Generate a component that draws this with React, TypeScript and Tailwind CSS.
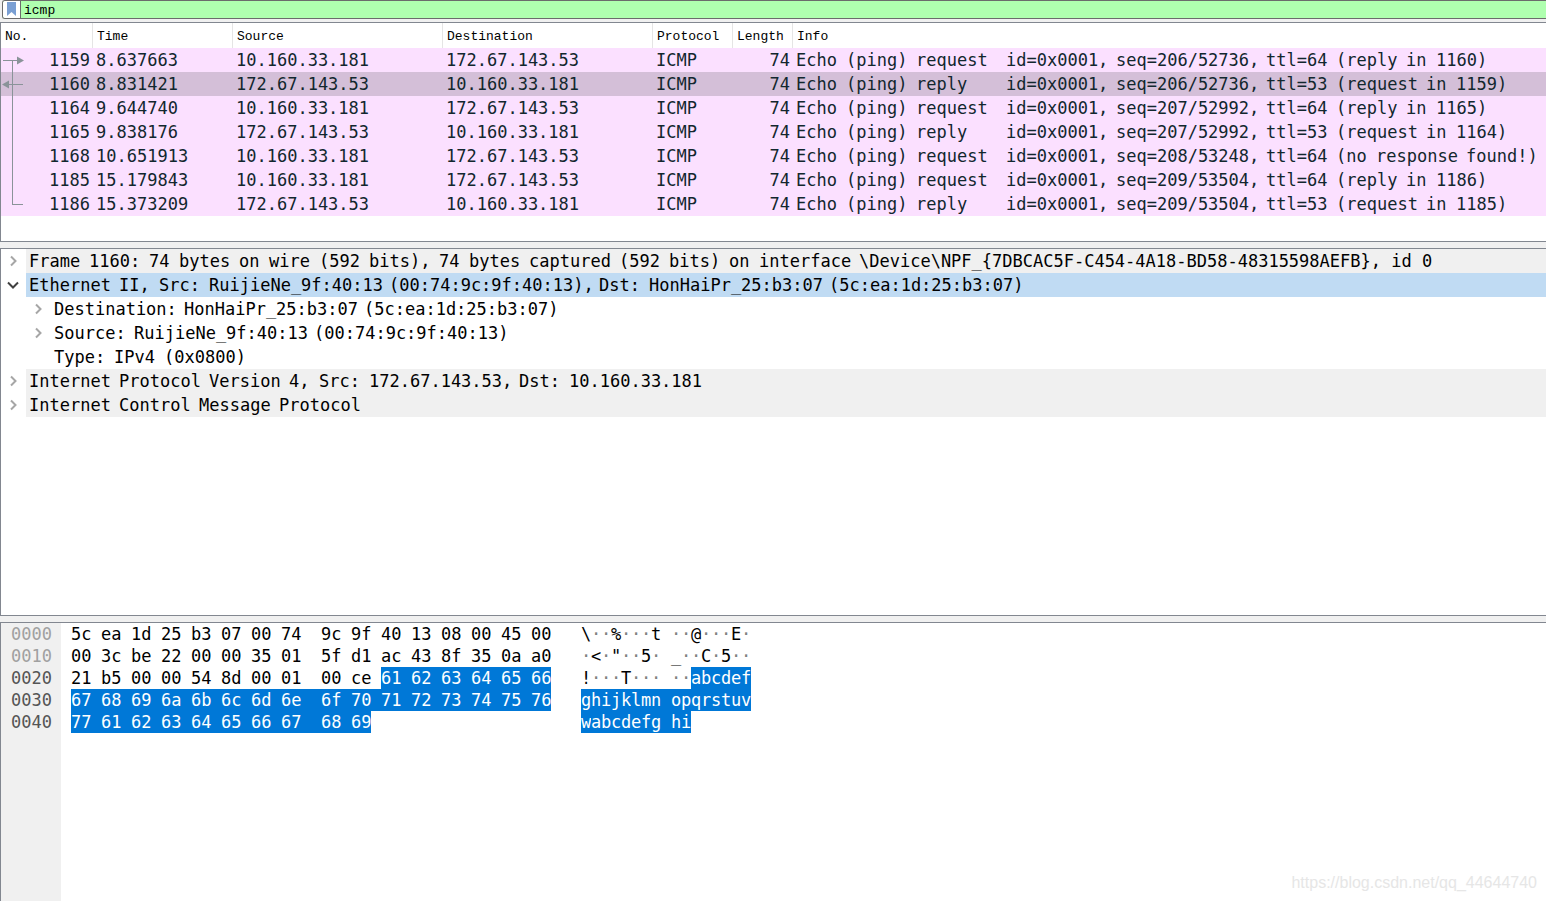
import React from "react";

type Packet = {
  no: number;
  time: string;
  source: string;
  destination: string;
  kind: "request" | "reply";
  seq: string;
  ttl: number;
  note: string;
};

const LOCAL = "10.160.33.181";
const REMOTE = "172.67.143.53";

const packets: Packet[] = [
  { no: 1159, time: "8.637663", source: LOCAL, destination: REMOTE, kind: "request", seq: "206/52736", ttl: 64, note: "(reply in 1160)" },
  { no: 1160, time: "8.831421", source: REMOTE, destination: LOCAL, kind: "reply", seq: "206/52736", ttl: 53, note: "(request in 1159)" },
  { no: 1164, time: "9.644740", source: LOCAL, destination: REMOTE, kind: "request", seq: "207/52992", ttl: 64, note: "(reply in 1165)" },
  { no: 1165, time: "9.838176", source: REMOTE, destination: LOCAL, kind: "reply", seq: "207/52992", ttl: 53, note: "(request in 1164)" },
  { no: 1168, time: "10.651913", source: LOCAL, destination: REMOTE, kind: "request", seq: "208/53248", ttl: 64, note: "(no response found!)" },
  { no: 1185, time: "15.179843", source: LOCAL, destination: REMOTE, kind: "request", seq: "209/53504", ttl: 64, note: "(reply in 1186)" },
  { no: 1186, time: "15.373209", source: REMOTE, destination: LOCAL, kind: "reply", seq: "209/53504", ttl: 53, note: "(request in 1185)" },
];

const columns = ["No.", "Time", "Source", "Destination", "Protocol", "Length", "Info"];

type TreeItem = { text: string; state: "closed" | "open" | "leaf"; level: 1 | 2; tone: string };

const tree: TreeItem[] = [
  { text: "Frame 1160: 74 bytes on wire (592 bits), 74 bytes captured (592 bits) on interface \\Device\\NPF_{7DBCAC5F-C454-4A18-BD58-48315598AEFB}, id 0", state: "closed", level: 1, tone: "bg-[#f0f0f0]" },
  { text: "Ethernet II, Src: RuijieNe_9f:40:13 (00:74:9c:9f:40:13), Dst: HonHaiPr_25:b3:07 (5c:ea:1d:25:b3:07)", state: "open", level: 1, tone: "bg-[#c0dbf3]" },
  { text: "Destination: HonHaiPr_25:b3:07 (5c:ea:1d:25:b3:07)", state: "closed", level: 2, tone: "" },
  { text: "Source: RuijieNe_9f:40:13 (00:74:9c:9f:40:13)", state: "closed", level: 2, tone: "" },
  { text: "Type: IPv4 (0x0800)", state: "leaf", level: 2, tone: "" },
  { text: "Internet Protocol Version 4, Src: 172.67.143.53, Dst: 10.160.33.181", state: "closed", level: 1, tone: "bg-[#f0f0f0]" },
  { text: "Internet Control Message Protocol", state: "closed", level: 1, tone: "bg-[#f0f0f0]" },
];

const bytes = (
  "5c ea 1d 25 b3 07 00 74 9c 9f 40 13 08 00 45 00 " +
  "00 3c be 22 00 00 35 01 5f d1 ac 43 8f 35 0a a0 " +
  "21 b5 00 00 54 8d 00 01 00 ce 61 62 63 64 65 66 " +
  "67 68 69 6a 6b 6c 6d 6e 6f 70 71 72 73 74 75 76 " +
  "77 61 62 63 64 65 66 67 68 69"
).split(" ");
const SELECTED_FROM = 42;
const offsets = ["0000", "0010", "0020", "0030", "0040"];

function toChar(hex: string) {
  const code = parseInt(hex, 16);
  return code > 32 && code < 127 ? String.fromCharCode(code) : "·";
}

/** Width of one character cell in the data panes. */
const CELL = 10;

/**
 * Lays words out on the character grid, so that columns line up between rows.
 * The tail after a closing brace stays in one run with the long name before it.
 */
function GridText({ text }: { text: string }) {
  return (
    <>
      {text.split(/(?<= )(?<!}.*)(?! )/).map((word, i) => (
        <span key={i} className="inline-block" style={{ width: word.length * CELL }}>{word}</span>
      ))}
    </>
  );
}

function ConversationMark({ index }: { index: number }) {
  const last = index === packets.length - 1;
  return (
    <svg width="24" height="24" viewBox="0 0 24 24" fill="none" stroke="#8a9399" shapeRendering="crispEdges" aria-hidden="true">
      {index === 0 && (
        <>
          <path d="M2 12.5H17M11.5 12.5V24" />
          <path d="M16 8.5L23 12.5L16 16.5Z" fill="#8a9399" stroke="none" shapeRendering="auto" />
        </>
      )}
      {index === 1 && (
        <>
          <path d="M8 12.5H22M11.5 0V24" />
          <path d="M8 8.5L1 12.5L8 16.5Z" fill="#8a9399" stroke="none" shapeRendering="auto" />
        </>
      )}
      {index > 1 && !last && <path d="M11.5 0V24" />}
      {last && <path d="M11.5 0V12.5H22" />}
    </svg>
  );
}

function PacketList() {
  return (
    <section aria-label="Packet list" className="border-y border-l border-[#828790] bg-white pb-[25px]">
      <table className="w-full table-fixed border-collapse whitespace-pre text-left">
        <colgroup>
          <col className="w-[92px]" />
          <col className="w-[140px]" />
          <col className="w-[210px]" />
          <col className="w-[210px]" />
          <col className="w-[80px]" />
          <col className="w-[60px]" />
          <col />
        </colgroup>
        <thead className="font-['Liberation_Mono',monospace] text-[13px] leading-[23px] text-black">
          <tr>
            {columns.map((name) => (
              <th key={name} className="p-0 font-normal">
                <div className={name === "Info" ? "pt-[2px] pl-1" : "border-r border-[#e5e5e5] pt-[2px] pl-1"}>{name}</div>
              </th>
            ))}
          </tr>
        </thead>
        <tbody className="leading-6 text-[#12272e]">
          {packets.map((p, i) => (
            <tr key={p.no} className={p.no === 1160 ? "bg-[#d4bfd8]" : "bg-[#fbe0ff]"}>
              <td className="p-0">
                <div className="flex h-6 justify-between pr-[3px]">
                  <ConversationMark index={i} />
                  {p.no}
                </div>
              </td>
              <td className="py-0 pr-0 pl-[3px]">{p.time}</td>
              <td className="py-0 pr-0 pl-[3px]">{p.source}</td>
              <td className="py-0 pr-0 pl-[3px]">{p.destination}</td>
              <td className="py-0 pr-0 pl-[3px]">ICMP</td>
              <td className="py-0 pr-[3px] pl-0 text-right">74</td>
              <td className="overflow-hidden py-0 pr-0 pl-[3px]">
                <GridText text={`${`Echo (ping) ${p.kind}`.padEnd(21)}id=0x0001, seq=${p.seq}, ttl=${p.ttl} ${p.note}`} />
              </td>
            </tr>
          ))}
        </tbody>
      </table>
    </section>
  );
}

function Chevron({ open }: { open: boolean }) {
  return (
    <svg width="12" height="12" viewBox="0 0 12 12" fill="none" strokeWidth="2" aria-hidden="true">
      {open ? <path d="M1 3.5L6 8.5L11 3.5" stroke="#404040" /> : <path d="M4 1.5L8.5 6L4 10.5" stroke="#a6a6a6" />}
    </svg>
  );
}

function DetailTree() {
  return (
    <section aria-label="Packet details" className="min-h-0 flex-1 overflow-hidden border-y border-l border-[#828790] bg-white leading-6 whitespace-pre text-black">
      <ul>
        {tree.map((item) => (
          <li key={item.text} className={item.level === 2 ? "flex h-6 pl-[25px]" : "flex h-6"}>
            {item.state === "leaf" ? (
              <span className="w-[25px] shrink-0" />
            ) : (
              <button type="button" aria-expanded={item.state === "open"} aria-label={"Toggle " + item.text.split(" ")[0]} className="flex w-[25px] shrink-0 items-center pl-[6px]">
                <Chevron open={item.state === "open"} />
              </button>
            )}
            <span className={"flex-1 pl-[3px] " + item.tone}>
              <GridText text={item.text} />
            </span>
          </li>
        ))}
      </ul>
    </section>
  );
}

function HexView() {
  return (
    <section aria-label="Packet bytes" className="flex h-[279px] shrink-0 border-t border-l border-[#828790] bg-white leading-[22px] text-black">
      <div className="w-[60px] shrink-0 bg-[#f0f0f0] pl-[10px]">
        {offsets.map((o, i) => (
          <div key={o} className={i < 2 ? "text-[#a0a0a0]" : "text-[#555555]"}>{o}</div>
        ))}
      </div>
      <div className="pl-[10px]">
        {offsets.map((o, row) => {
          const start = row * 16;
          const line = bytes.slice(start, start + 16);
          return (
            <div key={o} className="flex h-[22px]">
              <div className="flex w-[510px]">
                {line.map((b, i) => {
                  const width = i === line.length - 1 ? "w-[20px]" : i === 7 ? "w-[40px]" : "w-[30px]";
                  const tone = start + i >= SELECTED_FROM ? "bg-[#0078d7] text-white" : "";
                  return <span key={i} className={width + " " + tone}>{b}</span>;
                })}
              </div>
              <div className="flex">
                {line.map((b, i) => {
                  const c = toChar(b);
                  const width = i === 7 ? "w-[20px]" : "w-[10px]";
                  const tone = start + i >= SELECTED_FROM ? "bg-[#0078d7] text-white" : c === "·" ? "text-[#808080]" : "";
                  return <span key={i} className={width + " " + tone}>{c}</span>;
                })}
              </div>
            </div>
          );
        })}
      </div>
    </section>
  );
}

export default function App() {
  return (
    <main className="relative flex h-screen min-h-[640px] flex-col overflow-hidden bg-[#f0f0f0] font-['DejaVu_Sans_Mono',monospace] text-[17px]">
      <div className="mb-[3px] ml-[2px] flex h-[19px] shrink-0 rounded-l-[3px] border-y border-l border-[#6b6b6b] bg-[#afffaf]">
        <button type="button" aria-label="Filter bookmarks" className="flex w-[18px] shrink-0 items-start justify-center rounded-l-[2px] border-r border-[#6b6b6b] bg-white pt-px">
          <svg width="9" height="14" viewBox="0 0 9 14" aria-hidden="true">
            <path d="M0 0H9V14L4.5 10L0 14Z" fill="#7a9fd3" />
          </svg>
        </button>
        <input type="text" aria-label="Display filter" defaultValue="icmp" className="min-w-0 flex-1 bg-transparent pt-[2px] pl-[3px] font-['Liberation_Mono',monospace] text-[13px] leading-[15px] text-black outline-none" />
      </div>
      <PacketList />
      <div className="h-[6px] shrink-0" />
      <DetailTree />
      <div className="h-[6px] shrink-0" />
      <HexView />
      <div className="absolute right-[9px] bottom-[8px] font-['Liberation_Sans',sans-serif] text-[16px] leading-5 text-[#e6e6e6]">
        https://blog.csdn.net/qq_44644740
      </div>
    </main>
  );
}
